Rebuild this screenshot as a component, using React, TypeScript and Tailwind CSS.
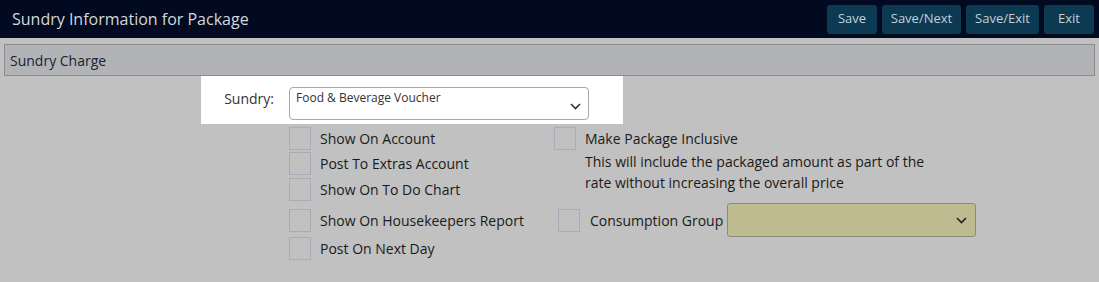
import React from "react";

function Box({ className = "" }: { className?: string }) {
  return <div className={`w-[22px] h-[23px] border border-[#a9abb9] shrink-0 ${className}`} />;
}

function Chevron({ color = "#333" }: { color?: string }) {
  return (
    <svg width="11" height="7" viewBox="0 0 11 7" fill="none">
      <path d="M1 1l4.5 4.5L10 1" stroke={color} strokeWidth="1.6" />
    </svg>
  );
}

export default function App() {
  const font = { fontFamily: '"Open Sans", "Noto Sans", sans-serif' };
  return (
    <div className="w-[1099px] h-[282px] bg-[#c1c1c1] overflow-hidden" style={font}>
      <div className="h-[38px] bg-[#010a20] flex items-center justify-between pl-[12px] pr-[5px]">
        <div className="text-[16px] text-[#d4d7dc] leading-none">Sundry Information for Package</div>
        <div className="flex gap-[5px]">
          {[
            ["Save", "w-[50px]"],
            ["Save/Next", "w-[79px]"],
            ["Save/Exit", "w-[73px]"],
            ["Exit", "w-[50px]"],
          ].map(([t, w]) => (
            <div
              key={t}
              className={`${w} h-[29px] rounded-[3px] bg-[#0b3a52] text-[#c3d0d6] text-[13px] flex items-center justify-center`}
            >
              {t}
            </div>
          ))}
        </div>
      </div>
      <div className="px-[4px] pt-[6px]">
        <div className="h-[32px] border border-[#8a8c8e] bg-[#b1b3b6] flex items-center pl-[5px] text-[14px] text-[#1c2430]">
          Sundry Charge
        </div>
      </div>
      <div className="ml-[201px] w-[422px] h-[48px] bg-white flex items-start pt-[11px]">
        <div className="w-[73px] text-right text-[14px] text-[#333] mt-[1px]">Sundry:</div>
        <div className="ml-[15px] w-[300px] h-[33px] border border-[#a8a8a8] rounded-[4px] relative">
          <div className="pl-[6px] pt-[1px] text-[12px] text-[#333] leading-[18px]">Food &amp; Beverage Voucher</div>
          <div className="absolute right-[7px] top-[15px]">
            <Chevron />
          </div>
        </div>
      </div>
      <div className="ml-[289px] pt-[3px] text-[14px] text-[#1a1a1a]">
        <div className="flex">
          <div className="w-[265px] flex flex-col gap-[2px]">
            <div className="flex items-center gap-[9px] h-[23px]">
              <Box />
              <span>Show On Account</span>
            </div>
            <div className="flex items-center gap-[9px] h-[23px]">
              <Box />
              <span>Post To Extras Account</span>
            </div>
            <div className="flex items-center gap-[9px] h-[24px]">
              <Box />
              <span>Show On To Do Chart</span>
            </div>
          </div>
          <div className="flex flex-col">
            <div className="flex items-center gap-[9px] h-[23px]">
              <Box />
              <span>Make Package Inclusive</span>
            </div>
            <div className="ml-[31px] mt-[1px] leading-[21px] w-[360px]">
              This will include the packaged amount as part of the
              <br />
              rate without increasing the overall price
            </div>
          </div>
        </div>
        <div className="flex mt-[2px] items-center">
          <div className="w-[269px] flex items-center gap-[9px] h-[23px]">
            <Box />
            <span>Show On Housekeepers Report</span>
          </div>
          <div className="flex items-center">
            <Box />
            <span className="ml-[10px]">Consumption Group</span>
            <div className="ml-[4px] w-[249px] h-[34px] bg-[#bfbb90] border border-[#8a8a80] rounded-[3px] relative">
              <div className="absolute right-[8px] top-[13px]">
                <Chevron color="#222" />
              </div>
            </div>
          </div>
        </div>
        <div className="flex items-center gap-[9px] h-[23px]">
          <Box />
          <span>Post On Next Day</span>
        </div>
      </div>
    </div>
  );
}
